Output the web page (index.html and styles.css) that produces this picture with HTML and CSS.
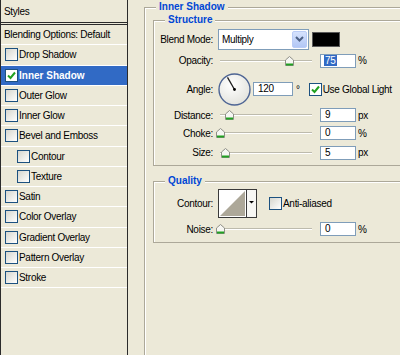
FILE: index.html
```html
<!DOCTYPE html>
<html>
<head>
<meta charset="utf-8">
<link rel="stylesheet" href="styles.css">
</head>
<body>
<div class="app">
  <aside class="sidebar">
    <div class="side-title">Styles</div>
    <div class="side-row plain">Blending Options: Default</div>
    <div class="side-row"><span class="cb"></span>Drop Shadow</div>
    <div class="side-row active"><span class="cb checked"><svg width="11" height="11" viewBox="0 0 11 11"><polyline points="2,5.5 4.5,8 9,2.5" fill="none" stroke="#21A121" stroke-width="2"/></svg></span>Inner Shadow</div>
    <div class="side-row"><span class="cb"></span>Outer Glow</div>
    <div class="side-row"><span class="cb"></span>Inner Glow</div>
    <div class="side-row"><span class="cb"></span>Bevel and Emboss</div>
    <div class="side-row sub"><span class="cb"></span>Contour</div>
    <div class="side-row sub"><span class="cb"></span>Texture</div>
    <div class="side-row"><span class="cb"></span>Satin</div>
    <div class="side-row"><span class="cb"></span>Color Overlay</div>
    <div class="side-row"><span class="cb"></span>Gradient Overlay</div>
    <div class="side-row"><span class="cb"></span>Pattern Overlay</div>
    <div class="side-row"><span class="cb"></span>Stroke</div>
  </aside>
  <main class="pane">
    <fieldset class="group outer">
      <legend>Inner Shadow</legend>
      <fieldset class="group inner structure">
        <legend>Structure</legend>
        <div class="form">
          <label>Blend Mode:</label>
          <div class="ctrl">
            <div class="select"><span>Multiply</span><div class="btn"><svg width="9" height="6" viewBox="0 0 9 6"><path d="M1 1 L4.5 4.5 L8 1" fill="none" stroke="#4D6185" stroke-width="2"/></svg></div></div>
            <div class="swatch"></div>
          </div>

          <label>Opacity:</label>
          <div class="ctrl">
            <div class="slider"><div class="track"></div><svg class="thumb" style="left:67px" width="9" height="10" viewBox="0 0 9 10"><path d="M0.5 9.5 V4 L4.5 0.5 L8.5 4 V9.5 Z" fill="#F6F6F2" stroke="#8E8F87"/><path d="M1 8.5 H8" stroke="#21A121" stroke-width="2"/></svg></div>
            <div class="num"><span class="sel">75</span></div><span class="unit">%</span>
          </div>

          <label>Angle:</label>
          <div class="ctrl">
            <svg class="dial" width="33" height="33" viewBox="0 0 33 33">
              <defs><radialGradient id="dg" cx="0.4" cy="0.35" r="0.7"><stop offset="0" stop-color="#FFFFFF"/><stop offset="1" stop-color="#E2E2DC"/></radialGradient></defs>
              <circle cx="16.5" cy="16.5" r="15.5" fill="url(#dg)" stroke="#4E6594" stroke-width="1.4"/>
              <line x1="16.5" y1="16.5" x2="9.5" y2="4.4" stroke="#1E1E1E" stroke-width="1.3"/>
              <circle cx="16.5" cy="16.5" r="1.4" fill="#000"/>
            </svg>
            <div class="num angle">120</div><span class="deg">°</span>
            <span class="cb checked gl"><svg width="11" height="11" viewBox="0 0 11 11"><polyline points="2,5.5 4.5,8 9,2.5" fill="none" stroke="#21A121" stroke-width="2"/></svg></span><span>Use Global Light</span>
          </div>

          <label>Distance:</label>
          <div class="ctrl">
            <div class="slider"><div class="track"></div><svg class="thumb" style="left:7px" width="9" height="10" viewBox="0 0 9 10"><path d="M0.5 9.5 V4 L4.5 0.5 L8.5 4 V9.5 Z" fill="#F6F6F2" stroke="#8E8F87"/><path d="M1 8.5 H8" stroke="#21A121" stroke-width="2"/></svg></div>
            <div class="num">9</div><span class="unit">px</span>
          </div>

          <label>Choke:</label>
          <div class="ctrl">
            <div class="slider"><div class="track"></div><svg class="thumb" style="left:-2px" width="9" height="10" viewBox="0 0 9 10"><path d="M0.5 9.5 V4 L4.5 0.5 L8.5 4 V9.5 Z" fill="#F6F6F2" stroke="#8E8F87"/><path d="M1 8.5 H8" stroke="#21A121" stroke-width="2"/></svg></div>
            <div class="num">0</div><span class="unit">%</span>
          </div>

          <label>Size:</label>
          <div class="ctrl">
            <div class="slider"><div class="track"></div><svg class="thumb" style="left:3px" width="9" height="10" viewBox="0 0 9 10"><path d="M0.5 9.5 V4 L4.5 0.5 L8.5 4 V9.5 Z" fill="#F6F6F2" stroke="#8E8F87"/><path d="M1 8.5 H8" stroke="#21A121" stroke-width="2"/></svg></div>
            <div class="num">5</div><span class="unit">px</span>
          </div>
        </div>
      </fieldset>

      <fieldset class="group inner quality">
        <legend>Quality</legend>
        <div class="form">
          <label>Contour:</label>
          <div class="ctrl">
            <svg class="contour" width="39" height="29" viewBox="0 0 39 29">
              <rect x="0.5" y="0.5" width="38" height="28" fill="#FFFFFF" stroke="#3A3A3A"/>
              <polygon points="2,27 27,2 27,27" fill="#ADA899"/>
              <line x1="28.5" y1="1" x2="28.5" y2="28" stroke="#3A3A3A"/>
              <rect x="29" y="1" width="9" height="27" fill="#F7F7F4"/>
              <polygon points="31,12 36,12 33.5,14.5" fill="#000"/>
            </svg>
            <span class="cb aa"></span><span>Anti-aliased</span>
          </div>

          <label>Noise:</label>
          <div class="ctrl">
            <div class="slider"><div class="track"></div><svg class="thumb" style="left:-2px" width="9" height="10" viewBox="0 0 9 10"><path d="M0.5 9.5 V4 L4.5 0.5 L8.5 4 V9.5 Z" fill="#F6F6F2" stroke="#8E8F87"/><path d="M1 8.5 H8" stroke="#21A121" stroke-width="2"/></svg></div>
            <div class="num">0</div><span class="unit">%</span>
          </div>
        </div>
      </fieldset>
    </fieldset>
  </main>
</div>
</body>
</html>
```
FILE: styles.css
```css
html, body {
  margin: 0;
  padding: 0;
  overflow: hidden;
}
body {
  background: #ECE9D8;
  font-family: "Liberation Sans", Arial, sans-serif;
  font-size: 10px;
  color: #000;
  letter-spacing: -0.3px;
}
.app {
  display: flex;
  width: 400px;
  height: 355px;
  overflow: hidden;
}
.sidebar {
  flex: none;
  width: 128px;
  height: 355px;
  box-sizing: border-box;
  border-left: 1px solid #2b2b2b;
  border-right: 1px solid #2b2b2b;
}
.side-title {
  height: 21px;
  padding: 1px 0 0 3px;
  line-height: 21px;
  border-bottom: 3px double #2b2b2b;
}
.side-row {
  height: 19.25px;
  border-bottom: 1px solid #FFFFFF;
  display: flex;
  align-items: center;
  padding-left: 4px;
  white-space: nowrap;
}
.side-row.plain { padding-left: 3px; }
.side-row.sub { padding-left: 16px; }
.side-row.active {
  background: #316AC5;
  color: #FFFFFF;
  font-weight: bold;
  letter-spacing: 0;
}
.cb {
  flex: none;
  width: 13px;
  height: 13px;
  box-sizing: border-box;
  border: 1px solid #1C5180;
  background: linear-gradient(135deg, #D6D6CE, #FFFFFF);
  margin-right: 1px;
  display: inline-flex;
}
.cb.checked { background: #FFFFFF; }
.cb svg { display: block; }

.pane {
  flex: none;
  width: 272px;
  box-sizing: border-box;
  padding: 1px 0 0 16px;
}
.group {
  margin: 0;
  padding: 0;
  border: 1px solid #ACA899;
  box-shadow: inset 1px 1px 0 #FFFFFF;
  min-inline-size: 0;
}
.group legend {
  margin-left: 11px;
  padding: 0 3px;
  font-weight: bold;
  color: #0046D5;
  line-height: 12px;
  letter-spacing: 0;
  background: #ECE9D8;
}
.outer {
  width: 300px;
  height: 420px;
  box-sizing: border-box;
}
.inner { margin: 1px 0 0 8px; }
.quality { margin-top: 9px; }

.form {
  display: grid;
  grid-template-columns: 59px auto;
  column-gap: 5px;
  align-items: center;
  justify-items: start;
}
.structure .form {
  grid-template-rows: 22px 21px 36px 16px 20px 19px;
  padding: 2px 0 3px;
}
.quality .form {
  grid-template-rows: 28px 24px;
  padding: 2px 0 1px;
}
.form label {
  justify-self: end;
  white-space: nowrap;
}
.ctrl {
  display: flex;
  align-items: center;
  white-space: nowrap;
}

.select {
  display: flex;
  width: 91px;
  height: 21px;
  box-sizing: border-box;
  border: 1px solid #7F9DB9;
  background: #FFFFFF;
}
.select span {
  flex: 1;
  padding-left: 3px;
  line-height: 19px;
}
.select .btn {
  width: 15px;
  margin: 1px;
  box-sizing: border-box;
  border: 1px solid #BACCF6;
  border-radius: 2px;
  background: linear-gradient(#D6E2FD, #B2C7F5);
  display: flex;
  align-items: center;
  justify-content: center;
}
.select .btn svg { display: block; }
.swatch {
  width: 28px;
  height: 15px;
  box-sizing: border-box;
  background: #000000;
  border: 1px solid #5A5A5A;
  margin-left: 3px;
}

.slider {
  position: relative;
  width: 98px;
  height: 10px;
  margin-right: 4px;
  display: flex;
  align-items: center;
}
.track {
  margin-left: 2px;
  width: 92px;
  height: 0;
  border-top: 1px solid #BDBBAD;
  border-bottom: 1px solid #FFFFFF;
}
.thumb {
  position: absolute;
  top: 0;
  display: block;
}
.num {
  width: 36px;
  height: 14px;
  box-sizing: border-box;
  border: 1px solid #7F9DB9;
  background: #FFFFFF;
  padding-left: 4px;
  line-height: 12px;
}
.num.angle {
  width: 40px;
  margin-left: 2px;
}
.sel {
  background: #316AC5;
  color: #FFFFFF;
  padding: 0 1px;
  margin-left: -1px;
}
.unit { margin-left: 2px; }
.dial { display: block; }
.deg {
  margin-left: 3px;
  align-self: center;
}
.cb.gl { margin-left: 9px; }
.contour { display: block; }
.cb.aa { margin-left: 12px; }
```
